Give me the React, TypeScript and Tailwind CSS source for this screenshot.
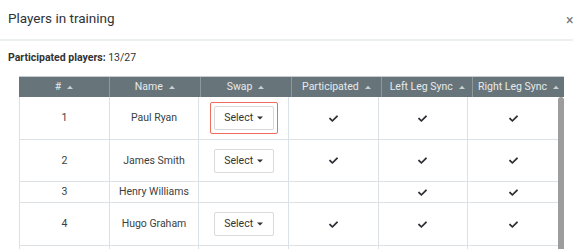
import React from "react";

const Check = () => (
  <svg width="9" height="7" viewBox="0 0 512 400" className="inline-block">
    <path
      fill="#2b2f33"
      d="M173.898 391.404l-166.4-166.4c-9.997-9.997-9.997-26.206 0-36.204l36.203-36.204c9.997-9.998 26.207-9.998 36.204 0L192 264.69 432.095 24.596c9.997-9.997 26.207-9.997 36.204 0l36.203 36.204c9.997 9.997 9.997 26.206 0 36.204l-294.4 294.401c-9.998 9.997-26.207 9.997-36.204-.001z"
    />
  </svg>
);

const CaretUp = () => (
  <svg width="6" height="4" viewBox="0 0 6 4" className="inline-block ml-[6px]">
    <path d="M0 4 L3 0.8 L6 4 Z" fill="#c9d0d3" />
  </svg>
);

const CaretDown = () => (
  <svg width="6" height="4" viewBox="0 0 6 4" className="inline-block ml-[4px]">
    <path d="M0 0.5 L6 0.5 L3 3.5 Z" fill="#333" />
  </svg>
);

const SelectBtn = ({ highlight }: { highlight?: boolean }) => {
  const btn = (
    <div className="w-[60px] h-[24px] border border-[#d6dadd] rounded-[2px] bg-white flex items-center justify-center text-[10.5px] text-[#333]">
      Select
      <CaretDown />
    </div>
  );
  if (!highlight) return btn;
  return (
    <div className="border-[1.5px] border-[#ef6c5c] rounded-[2px] p-[3px]">{btn}</div>
  );
};

type Row = {
  n: number;
  name: string;
  swap: boolean;
  p: boolean;
  l: boolean;
  r: boolean;
  h: string;
  hl?: boolean;
};

const rows: Row[] = [
  { n: 1, name: "Paul Ryan", swap: true, p: true, l: true, r: true, h: "h-[43px]", hl: true },
  { n: 2, name: "James Smith", swap: true, p: true, l: true, r: true, h: "h-[42px]" },
  { n: 3, name: "Henry Williams", swap: false, p: false, l: true, r: true, h: "h-[21px]" },
  { n: 4, name: "Hugo Graham", swap: true, p: true, l: true, r: true, h: "h-[43px]" },
  { n: 5, name: "", swap: false, p: false, l: false, r: false, h: "h-[43px]" },
];

const headers = ["#", "Name", "Swap", "Participated", "Left Leg Sync", "Right Leg Sync"];

export default function App() {
  return (
    <div
      className="w-[573px] h-[249px] overflow-hidden bg-white relative"
      style={{ fontFamily: "Roboto, 'Liberation Sans', sans-serif" }}
    >
      <div className="h-[41px] border-b-2 border-[#eceff0] flex items-center pl-[8px] pb-[3px]">
        <div className="text-[13.5px] text-[#2e3338]">Players in training</div>
        <div className="absolute left-[566px] top-[10px] text-[14px] text-[#777]">×</div>
      </div>
      <div className="pl-[8px] pt-[9px] h-[35px] text-[10.5px] text-[#333]">
        <span className="font-bold">Participated players:</span> 13/27
      </div>
      <div className="ml-[19px] w-[545px]">
        <div className="grid grid-cols-6 h-[21px] bg-[#67757a] border-t border-[#c5cdd0]">
          {headers.map((h, i) => (
            <div
              key={h}
              className={`flex items-center justify-center text-[10.5px] text-[#e6eaec] ${
                i < 5 ? "border-r border-[#8e999d]" : ""
              }`}
            >
              {h}
              <CaretUp />
            </div>
          ))}
        </div>
        <div className="flex">
          <div className="w-[539px]">
            {rows.map((r) => (
              <div
                key={r.n}
                className={`grid grid-cols-6 ${r.h} border-b border-[#dbe1e4] border-l text-[10.5px] text-[#3a3f44]`}
              >
                <div className="flex items-center justify-center border-r border-[#dbe1e4]">
                  {r.name ? r.n : ""}
                </div>
                <div className="flex items-center justify-center border-r border-[#dbe1e4]">
                  {r.name}
                </div>
                <div className="flex items-center justify-center border-r border-[#dbe1e4]">
                  {r.swap && <SelectBtn highlight={r.hl} />}
                </div>
                <div className="flex items-center justify-center border-r border-[#dbe1e4]">
                  {r.p && <Check />}
                </div>
                <div className="flex items-center justify-center border-r border-[#dbe1e4]">
                  {r.l && <Check />}
                </div>
                <div className="flex items-center justify-center">{r.r && <Check />}</div>
              </div>
            ))}
          </div>
          <div className="w-[6px] bg-[#9d9d9d] rounded-t-[3px]" />
        </div>
      </div>
    </div>
  );
}
